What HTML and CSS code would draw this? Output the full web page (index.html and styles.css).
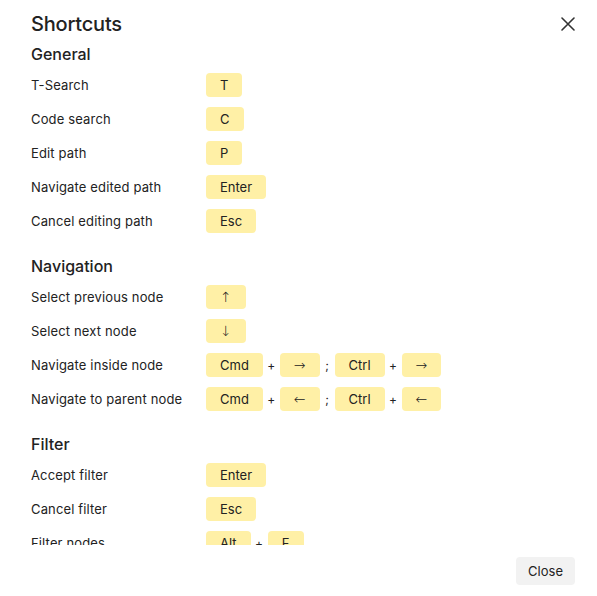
FILE: index.html
```html
<!DOCTYPE html>
<html lang="en">
<head>
<meta charset="utf-8">
<title>Shortcuts</title>
<link rel="stylesheet" href="styles.css">
</head>
<body>
<div class="modal">
  <header class="modal-header">
    <h1 class="modal-title">Shortcuts</h1>
    <button class="close-icon" aria-label="Close">
      <svg width="14" height="14" viewBox="0 0 14 14"><path d="M1 1L13 13M13 1L1 13" stroke="#333" stroke-width="1.6" stroke-linecap="round"/></svg>
    </button>
  </header>
  <div class="modal-body">
    <section class="group">
      <h2 class="group-title">General</h2>
      <div class="row"><span class="label">T-Search</span><span class="keys"><kbd class="key">T</kbd></span></div>
      <div class="row"><span class="label">Code search</span><span class="keys"><kbd class="key">C</kbd></span></div>
      <div class="row"><span class="label">Edit path</span><span class="keys"><kbd class="key">P</kbd></span></div>
      <div class="row"><span class="label">Navigate edited path</span><span class="keys"><kbd class="key">Enter</kbd></span></div>
      <div class="row"><span class="label">Cancel editing path</span><span class="keys"><kbd class="key">Esc</kbd></span></div>
    </section>
    <section class="group">
      <h2 class="group-title">Navigation</h2>
      <div class="row"><span class="label">Select previous node</span><span class="keys"><kbd class="key arrow">↑</kbd></span></div>
      <div class="row"><span class="label">Select next node</span><span class="keys"><kbd class="key arrow">↓</kbd></span></div>
      <div class="row"><span class="label">Navigate inside node</span><span class="keys"><kbd class="key">Cmd</kbd><span class="sep">+</span><kbd class="key arrow">→</kbd><span class="sep semi">;</span><kbd class="key">Ctrl</kbd><span class="sep">+</span><kbd class="key arrow">→</kbd></span></div>
      <div class="row"><span class="label">Navigate to parent node</span><span class="keys"><kbd class="key">Cmd</kbd><span class="sep">+</span><kbd class="key arrow">←</kbd><span class="sep semi">;</span><kbd class="key">Ctrl</kbd><span class="sep">+</span><kbd class="key arrow">←</kbd></span></div>
    </section>
    <section class="group">
      <h2 class="group-title">Filter</h2>
      <div class="row"><span class="label">Accept filter</span><span class="keys"><kbd class="key">Enter</kbd></span></div>
      <div class="row"><span class="label">Cancel filter</span><span class="keys"><kbd class="key">Esc</kbd></span></div>
      <div class="row"><span class="label">Filter nodes</span><span class="keys"><kbd class="key">Alt</kbd><span class="sep">+</span><kbd class="key">F</kbd></span></div>
    </section>
  </div>
  <footer class="modal-footer">
    <button class="btn">Close</button>
  </footer>
</div>
</body>
</html>
```

FILE: styles.css
```css
* { box-sizing: border-box; }
html, body { margin: 0; padding: 0; background: #fff; }
body {
  font-family: Inter, "Noto Sans", sans-serif;
  color: #222;
  font-size: 13px;
}
.modal {
  width: 597px;
  height: 596px;
  display: flex;
  flex-direction: column;
}
.modal-header {
  height: 42px;
  display: flex;
  align-items: center;
  justify-content: space-between;
  padding: 5px 21px 0 31px;
}
.modal-title {
  margin: 0;
  font-size: 20px;
  font-weight: 500;
  letter-spacing: -0.2px;
}
.close-icon {
  border: 0;
  background: none;
  padding: 0;
  width: 16px;
  height: 16px;
  display: flex;
  align-items: center;
  justify-content: center;
  cursor: pointer;
}
.modal-body {
  height: 503px;
  overflow: hidden;
  padding: 0 31px;
}
.group + .group { margin-top: 16px; }
.group-title {
  margin: 0;
  height: 26px;
  line-height: 24px;
  font-size: 16px;
  font-weight: 500;
}
.row {
  display: grid;
  grid-template-columns: 175px auto;
  align-items: center;
  height: 34px;
}
.label { line-height: 16px; letter-spacing: 0.15px; }
.keys {
  display: flex;
  align-items: center;
}
.key {
  font-family: inherit;
  font-size: 13px;
  height: 24px;
  line-height: 24px;
  padding: 0 14px;
  min-width: 36px;
  background: #fff0a6;
  border-radius: 4px;
  text-align: center;
}
.key.arrow {
  font-family: "DejaVu Sans", sans-serif;
  font-size: 14px;
  font-weight: 300;
  padding: 0 14px;
}
.sep {
  width: 17px;
  text-align: center;
  font-size: 12px;
}
.sep.semi { width: 15px; }
.modal-footer {
  flex: 1;
  display: flex;
  justify-content: flex-end;
  align-items: flex-start;
  padding: 12px 22px 0 0;
}
.btn {
  font-family: inherit;
  font-size: 13px;
  color: #222;
  height: 28px;
  padding: 0 12px;
  border: 0;
  border-radius: 4px;
  background: #f2f2f2;
}
```
